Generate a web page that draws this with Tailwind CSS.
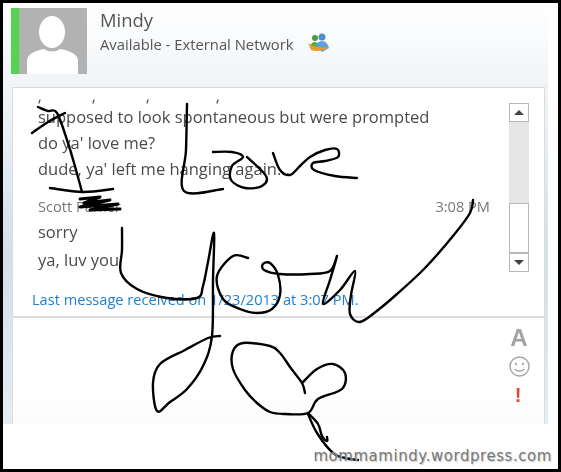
<!DOCTYPE html>
<html lang="en">
<head>
<meta charset="UTF-8">
<title>Mindy</title>
<script src="https://cdn.jsdelivr.net/npm/@tailwindcss/browser@4"></script>
</head>
<body class="bg-white">
<div class="relative w-[561px] h-[472px] border-t-[3px] border-l-[3px] border-r-[3px] border-b-[3px] border-black bg-white overflow-hidden font-['Open_Sans',sans-serif] text-[#444]">
    <!-- conversation window -->
    <div class="w-[545px] h-[421px] pl-[9px] pr-[3px] bg-linear-to-b from-white via-[#d3dfe9] via-60% to-[#e6edf2] blur-[0.4px]">
        <header class="h-[84px] -ml-[1px] pt-[5px] flex">
            <div class="w-[76px] h-[66px] flex bg-[#b2b2b2] overflow-hidden">
                <div class="w-[8px] bg-[#57d353]"></div>
                <svg width="68" height="66" viewBox="0 0 68 66" fill="#fff">
                    <ellipse cx="33" cy="24" rx="13" ry="16"/>
                    <path d="M8 66 V52 Q9 44 25 41 Q33 46 41 41 Q58 44 59 52 V66 Z"/>
                </svg>
            </div>
            <div class="ml-[13px]">
                <div class="text-[18.4px] leading-[24px] text-[#555]">Mindy</div>
                <div class="mt-[1px] flex items-center text-[14.8px] leading-[22px] text-[#555]">
                    Available - External Network
                    <svg class="ml-[14px] -mt-[2px]" width="22" height="20" viewBox="0 0 22 20">
                        <circle cx="7" cy="5" r="3" fill="#4f9a3c"/>
                        <circle cx="14" cy="4" r="3.500" fill="#4a90cf"/>
                        <path d="M2 14 Q3 9 7 9 Q10 9 11 14 Z" fill="#5aa845"/>
                        <path d="M8 14 Q9 8 14 8 Q19 8 21 15 L14 19 Z" fill="#5aa0dc"/>
                        <path d="M0 10 Q8 16 21 14 Q12 20 3 17 Z" fill="#ec9a2a"/>
                    </svg>
                </div>
            </div>
        </header>

        <main class="h-[337px] border-t border-l border-r border-[#d9dde0] bg-linear-to-b from-white from-90% to-[#fbfbfb]">
            <div class="h-[230px] flex border-b-2 border-[#dcdcdc]">
                <div class="flex-1 pl-[25px] pt-[16px] text-[16.5px] leading-[26px] text-[#4a4a4a]">
                    <p class="whitespace-nowrap">supposed to look spontaneous but were prompted</p>
                    <p>do ya' love me?</p>
                    <p class="whitespace-nowrap">dude, ya' left me hanging again...</p>
                    <div class="mt-[11px] w-[452px] flex justify-between text-[14.600px] text-[#777]">
                        <span>Scott Parker</span>
                        <span>3:08 PM</span>
                    </div>
                    <p>sorry</p>
                    <p class="mt-[2px]">ya, luv you</p>
                    <p class="-ml-[6px] mt-[16px] text-[14.6px] leading-[20px] text-[#1e7fd0] whitespace-nowrap">Last message received on 1/23/2013 at 3:07 PM.</p>
                </div>
                <!-- scrollbar -->
                <div class="w-[20px] mr-[15px] mt-[15px] h-[169px] flex flex-col bg-[#e6e6e6]">
                    <div class="h-[19px] border border-[#b8b8b8] bg-white flex items-center justify-center">
                        <div class="w-0 h-0 border-x-[5px] border-x-transparent border-b-[5px] border-b-[#444]"></div>
                    </div>
                    <div class="flex-1"></div>
                    <div class="h-[50px] border border-[#b8b8b8] bg-white"></div>
                    <div class="h-[19px] border border-[#b8b8b8] bg-white flex items-center justify-center">
                        <div class="w-0 h-0 border-x-[5px] border-x-transparent border-t-[5px] border-t-[#444]"></div>
                    </div>
                </div>
            </div>
            <!-- compose area -->
            <div class="flex justify-end pr-[15px] pt-[7px]">
                <div class="w-[20px] flex flex-col items-center">
                    <span class="font-['Liberation_Sans',sans-serif] font-bold text-[24px] leading-[26px] text-[#a3a3a3]">A</span>
                    <svg class="mt-[5px]" width="21" height="21" viewBox="0 0 21 21" fill="none" stroke="#a8a8a8" stroke-width="1.5">
                        <circle cx="10.500" cy="10.500" r="9.500"/>
                        <circle cx="7" cy="8" r="1.200" fill="#a8a8a8" stroke="none"/>
                        <circle cx="14" cy="8" r="1.200" fill="#a8a8a8" stroke="none"/>
                        <path d="M5.500 13 Q10.500 17.500 15.500 13"/>
                    </svg>
                    <span class="mt-[8px] -ml-[2px] font-['Liberation_Sans',sans-serif] font-bold text-[20px] leading-[20px] text-[#e2492a]">!</span>
                </div>
            </div>
        </main>
    </div>

    <!-- handwriting drawn over the window, coordinates are page pixels -->
    <svg id="ink" class="absolute -left-[3px] -top-[3px]" width="561" height="472" viewBox="0 0 561 472" fill="none" stroke="#000" stroke-width="2.4" stroke-linecap="round" stroke-linejoin="round">
        <path d="M39 103l1-3M93 103l1-3M147 103l1-3M217 103l1-3" stroke="#555" stroke-width="1.300"/>
    </svg>

    <div class="absolute right-[6px] bottom-[4px] font-['DejaVu_Sans',sans-serif] text-[15px] leading-[18px] tracking-[0.55px] text-[#777] [text-shadow:1px_1px_1px_#ccc]">mommamindy.wordpress.com</div>
</div>
<script>
    // hand strokes, smoothed through their points
    const strokes = [
        [[32,133],[48,122],[65,113]],
        [[38,107],[48,111],[57,113],[68,143],[76,170],[82,192]],
        [[50,188],[83,192],[113,189]],
        [[213,152],[232,152],[243,157],[232,166],[231,180],[245,188],[262,186],[266,176],[247,157]],
        [[187,104],[186,150],[184,191],[223,189]],
        [[273,153],[280,170],[290,175],[300,166],[310,157],[325,150],[337,149],[338,157],[325,161],[313,163],[314,170],[335,176],[357,178]],
        [[122,228],[122,250],[121,273],[137,289],[167,298],[197,298],[203,286],[208,262],[214,233],[213,280],[212,336],[203,366],[187,389],[170,402],[157,411],[153,383],[160,364],[185,350],[208,338],[220,336]],
        [[248,258],[233,256],[217,276],[223,299],[240,309],[257,313],[272,309],[280,295],[278,275],[270,263],[263,264],[264,270],[280,274],[310,274],[330,271],[337,256],[330,280],[323,304],[340,290],[355,271],[351,295],[350,314],[360,322],[378,310],[397,294],[425,268],[453,236],[470,213],[473,200]],
        [[305,393],[302,383],[290,367],[280,353],[270,346],[243,343],[233,351],[233,369],[245,390],[257,403],[270,412],[285,414],[308,413],[318,399],[342,389],[345,373],[333,364],[317,369],[302,383]],
        [[308,413],[318,424],[322,436],[327,441],[327,437]],
        [[308,414],[317,433],[333,453],[345,458],[358,460]]
    ];
    const ink = document.getElementById("ink");
    strokes.forEach(pts => {
        let d = "M" + pts[0].join(" ");
        for (let i = 1; i < pts.length; i++) {
            const a = pts[Math.max(i - 2, 0)], b = pts[i - 1], c = pts[i], e = pts[Math.min(i + 1, pts.length - 1)];
            d += ` C${b[0] + (c[0] - a[0]) / 6} ${b[1] + (c[1] - a[1]) / 6} ${c[0] - (e[0] - b[0]) / 6} ${c[1] - (e[1] - b[1]) / 6} ${c[0]} ${c[1]}`;
        }
        const path = document.createElementNS("http://www.w3.org/2000/svg", "path");
        path.setAttribute("d", d);
        ink.appendChild(path);
    });
    // name scribbled out
    const scribble = document.createElementNS("http://www.w3.org/2000/svg", "path");
    scribble.setAttribute("d", "M80 199L100 197L84 203L110 200L80 207L118 204L90 210L120 209");
    scribble.setAttribute("stroke-width", "3");
    ink.appendChild(scribble);
</script>
</body>
</html>
